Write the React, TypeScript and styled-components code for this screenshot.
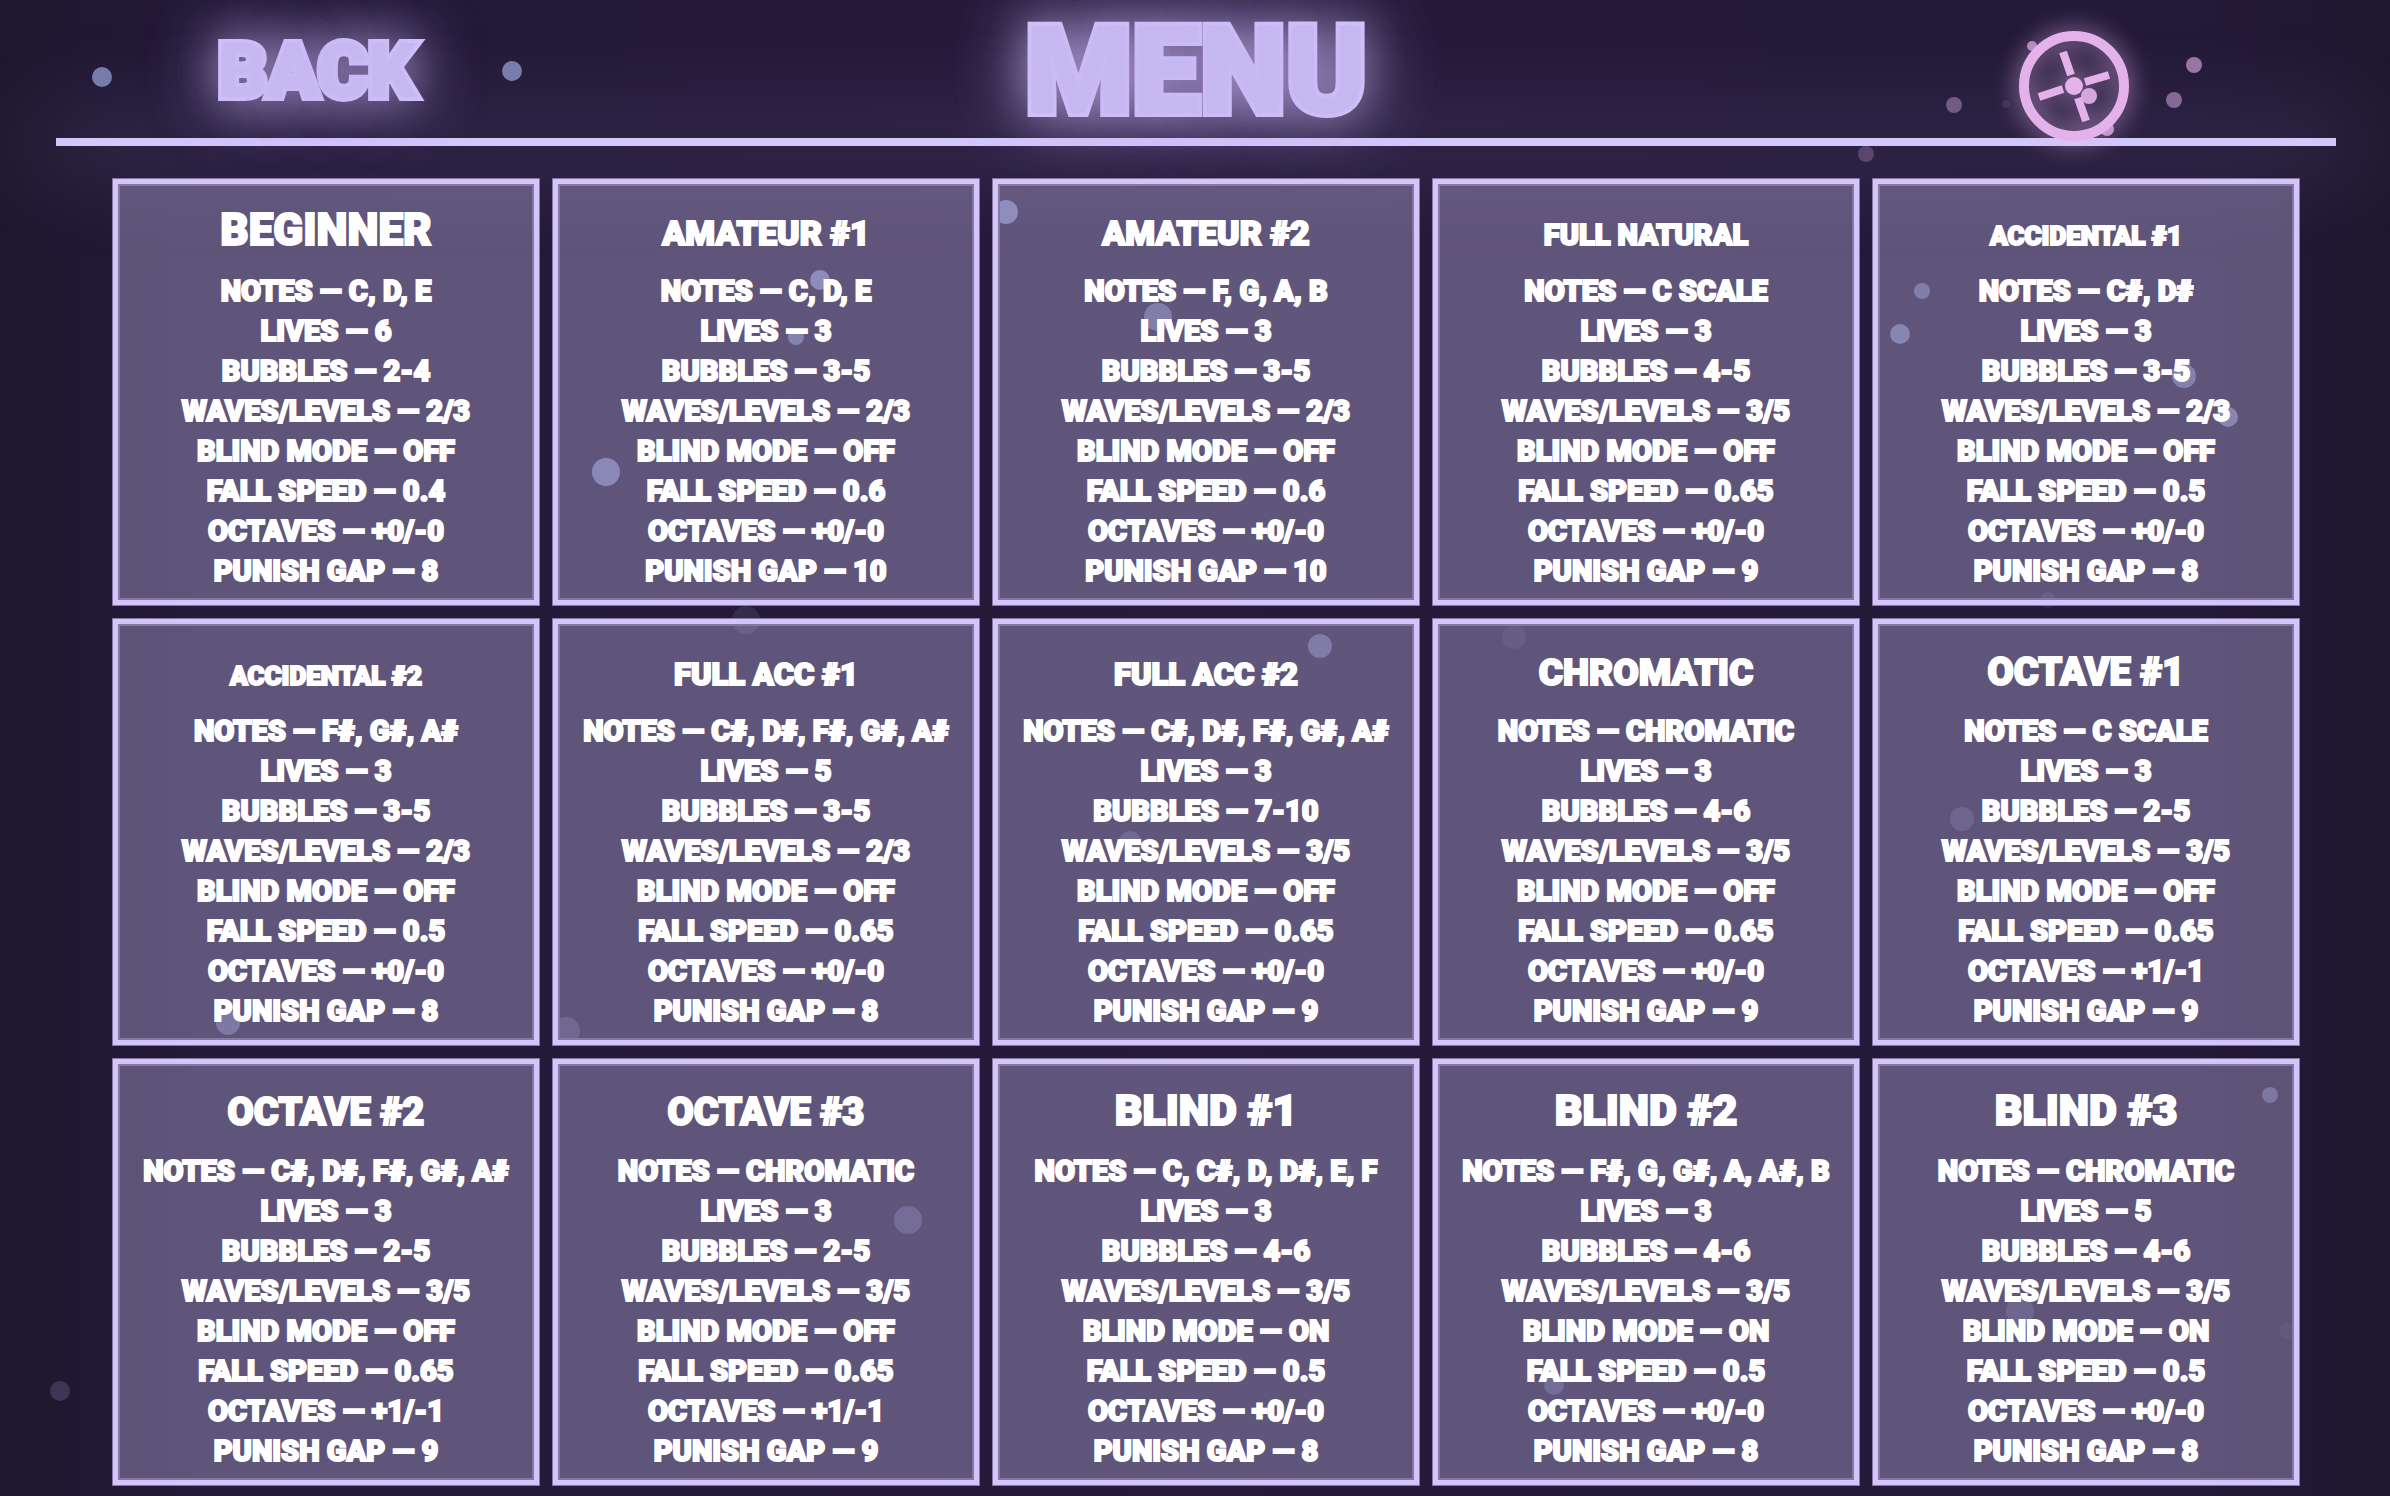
import React from "react";
import styled, { createGlobalStyle } from "styled-components";

const FONT = `Roboto, "Liberation Sans", sans-serif`;

const GlobalStyle = createGlobalStyle`
  * { box-sizing: border-box; }
  body { margin: 0; background: #211934; font-family: ${FONT}; }
`;

const Page = styled.div`
  position: relative;
  min-height: 100vh;
  overflow: hidden;
  background: linear-gradient(90deg, #1f182f 0, #231938 8%, #251a3a 50%, #231938 92%, #1f182f 100%);
`;

const Bubbles = styled.svg`
  position: absolute;
  inset: 0;
  width: 100%;
  height: 100%;
  pointer-events: none;
`;

const Header = styled.header`
  position: relative;
  display: grid;
  grid-template-columns: 1fr auto 1fr;
  align-items: start;
  height: 138px;
  margin: 0 54px 0 56px;
`;

const Divider = styled.div`
  height: 8px;
  margin: 0 54px 0 56px;
  background: #d3c8fa;
  box-shadow: 0 0 90px 24px rgba(150, 138, 200, 0.18);
`;

const BackButton = styled.button`
  justify-self: start;
  margin: 26px 0 0 162px;
  padding: 0;
  border: 0;
  background: none;
  font: 900 76px/90px ${FONT};
  color: #c5b8f1;
  -webkit-text-stroke: 8px #d3c8fa;
  paint-order: stroke fill;
  text-shadow:
    0 0 40px rgba(200, 180, 245, 0.6),
    0 0 70px rgba(200, 180, 245, 0.9),
    0 0 70px rgba(200, 180, 245, 0.5);
`;

const Title = styled.h1`
  margin: 4px 0 0;
  font: 900 122px/136px ${FONT};
  color: #c5b8f1;
  -webkit-text-stroke: 8px #d3c8fa;
  paint-order: stroke fill;
  text-shadow:
    0 0 40px rgba(200, 180, 245, 0.6),
    0 0 80px rgba(200, 180, 245, 0.9),
    0 0 80px rgba(200, 180, 245, 0.3);
`;

const WheelButton = styled.button`
  position: relative;
  z-index: 1;
  justify-self: end;
  display: flex;
  margin: 30px 206px 0 0;
  padding: 0;
  border: 0;
  background: none;
`;

const WheelIcon = styled.svg`
  width: 112px;
  height: 112px;
  overflow: visible;
  filter: drop-shadow(0 0 12px rgba(228, 178, 235, 0.8));
`;

const Levels = styled.main`
  position: relative;
  display: grid;
  grid-template-columns: repeat(5, 1fr);
  gap: 12px;
  padding: 32px 90px 10px 112px;
`;

const Card = styled.button`
  display: flex;
  flex-direction: column;
  align-items: center;
  justify-content: flex-start;
  aspect-ratio: 1;
  min-width: 0;
  padding: 20px 0 0;
  border: 6px solid #d3c5fb;
  outline: 1px solid #85789f;
  outline-offset: -1px;
  box-shadow: inset 0 0 0 2px #8578a4;
  background: rgba(211, 200, 250, 0.34);
  background-clip: padding-box;
  color: #fff;
  font-family: ${FONT};
  -webkit-text-stroke: 2px #fff;
`;

const Name = styled.span<{ $size: number }>`
  display: flex;
  align-items: baseline;
  height: 67px;
  font-size: ${(p) => p.$size}px;
  font-weight: 900;
  line-height: 48px;
  white-space: nowrap;

  &::before {
    content: "";
    height: 41px;
  }
`;

const Stat = styled.span`
  font-size: 29px;
  font-weight: 900;
  line-height: 40px;
  white-space: nowrap;
`;

type Level = [string, number, string, number, string, string, string, string, string, number];

const LEVELS: Level[] = [
  ["BEGINNER", 44, "C, D, E", 6, "2-4", "2/3", "OFF", "0.4", "+0/-0", 8],
  ["AMATEUR #1", 34, "C, D, E", 3, "3-5", "2/3", "OFF", "0.6", "+0/-0", 10],
  ["AMATEUR #2", 34, "F, G, A, B", 3, "3-5", "2/3", "OFF", "0.6", "+0/-0", 10],
  ["FULL NATURAL", 29, "C SCALE", 3, "4-5", "3/5", "OFF", "0.65", "+0/-0", 9],
  ["ACCIDENTAL #1", 26, "C#, D#", 3, "3-5", "2/3", "OFF", "0.5", "+0/-0", 8],
  ["ACCIDENTAL #2", 26, "F#, G#, A#", 3, "3-5", "2/3", "OFF", "0.5", "+0/-0", 8],
  ["FULL ACC #1", 31, "C#, D#, F#, G#, A#", 5, "3-5", "2/3", "OFF", "0.65", "+0/-0", 8],
  ["FULL ACC #2", 31, "C#, D#, F#, G#, A#", 3, "7-10", "3/5", "OFF", "0.65", "+0/-0", 9],
  ["CHROMATIC", 37, "CHROMATIC", 3, "4-6", "3/5", "OFF", "0.65", "+0/-0", 9],
  ["OCTAVE #1", 38, "C SCALE", 3, "2-5", "3/5", "OFF", "0.65", "+1/-1", 9],
  ["OCTAVE #2", 38, "C#, D#, F#, G#, A#", 3, "2-5", "3/5", "OFF", "0.65", "+1/-1", 9],
  ["OCTAVE #3", 38, "CHROMATIC", 3, "2-5", "3/5", "OFF", "0.65", "+1/-1", 9],
  ["BLIND #1", 43, "C, C#, D, D#, E, F", 3, "4-6", "3/5", "ON", "0.5", "+0/-0", 8],
  ["BLIND #2", 43, "F#, G, G#, A, A#, B", 3, "4-6", "3/5", "ON", "0.5", "+0/-0", 8],
  ["BLIND #3", 43, "CHROMATIC", 5, "4-6", "3/5", "ON", "0.5", "+0/-0", 8],
];

const STATS = ["NOTES", "LIVES", "BUBBLES", "WAVES/LEVELS", "BLIND MODE", "FALL SPEED", "OCTAVES", "PUNISH GAP"];

/* x, y, radius, opacity */
type Bubble = [number, number, number, number];

const BLUE: Bubble[] = [
  [102, 77, 10, 0.7], [512, 71, 10, 0.7],
  [820, 280, 10, 0.6], [796, 337, 8, 0.5], [606, 472, 14, 0.56],
  [1006, 212, 12, 0.6], [1158, 317, 14, 0.45], [1320, 646, 12, 0.42], [1514, 637, 12, 0.1],
  [1922, 291, 8, 0.45], [1900, 334, 10, 0.52], [2184, 376, 12, 0.48], [2228, 417, 10, 0.52],
  [2048, 600, 8, 0.12], [746, 620, 14, 0.14], [228, 1023, 12, 0.4], [566, 1031, 14, 0.22],
  [60, 1391, 10, 0.22], [908, 1220, 14, 0.27], [1130, 842, 11, 0.22], [1962, 819, 12, 0.2],
  [1554, 1385, 10, 0.27], [1342, 1170, 10, 0.12], [2270, 1095, 8, 0.38], [2020, 1311, 14, 0.2],
  [2287, 1331, 8, 0.06],
];

const PINK: Bubble[] = [
  [1954, 105, 8, 0.4], [2006, 104, 4, 0.1], [2032, 46, 5, 0.7], [2194, 65, 8, 0.6],
  [2174, 100, 8, 0.5], [2107, 129, 7, 0.8], [2089, 96, 8, 0.9], [1866, 154, 8, 0.25],
];

export default function App() {
  return (
    <Page>
      <GlobalStyle />
      <Header>
        <BackButton type="button">BACK</BackButton>
        <Title>MENU</Title>
        <WheelButton type="button" aria-label="Settings">
          <WheelIcon viewBox="-56 -56 112 112" fill="none" stroke="#e4b2eb">
            <circle r="50" strokeWidth="10" />
            <circle r="9" fill="#e4b2eb" stroke="none" />
            <path
              d="M-11 -34L-3 -11M11 -4L35 -11M-35 11L-11 3M4 12L12 35"
              strokeWidth="8"
            />
          </WheelIcon>
        </WheelButton>
      </Header>
      <Divider />
      <Bubbles viewBox="0 0 2390 1496" preserveAspectRatio="xMidYMin slice" aria-hidden="true">
        {BLUE.map(([x, y, r, o]) => (
          <circle key={`${x}-${y}`} cx={x} cy={y} r={r} fill="#9aa6dc" opacity={o} />
        ))}
        {PINK.map(([x, y, r, o]) => (
          <circle key={`${x}-${y}`} cx={x} cy={y} r={r} fill="#e4b2eb" opacity={o} />
        ))}
      </Bubbles>
      <Levels>
        {LEVELS.map(([name, size, ...values]) => (
          <Card type="button" key={name}>
            <Name $size={size}>{name}</Name>
            {values.map((value, i) => (
              <Stat key={STATS[i]}>{`${STATS[i]} — ${value}`}</Stat>
            ))}
          </Card>
        ))}
      </Levels>
    </Page>
  );
}
